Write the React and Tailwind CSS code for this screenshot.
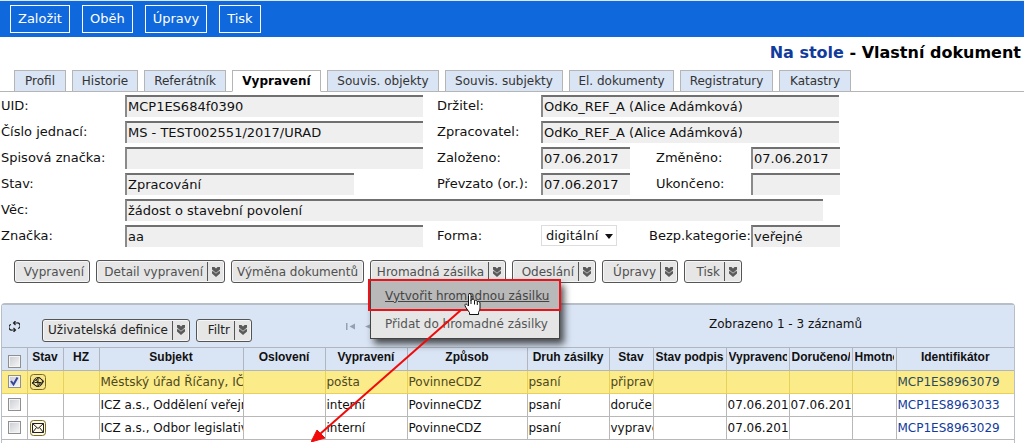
import { useState } from 'react';

const MENU = ['Založit', 'Oběh', 'Úpravy', 'Tisk'];

const TABS = [
  { label: 'Profil', width: 'w-[52px]' },
  { label: 'Historie', width: 'w-[66px]' },
  { label: 'Referátník', width: 'w-[82px]' },
  { label: 'Vypravení', width: 'w-[89px]' },
  { label: 'Souvis. objekty', width: 'w-[112px]' },
  { label: 'Souvis. subjekty', width: 'w-[118px]' },
  { label: 'El. dokumenty', width: 'w-[105px]' },
  { label: 'Registratury', width: 'w-[93px]' },
  { label: 'Katastry', width: 'w-[72px]' },
];

const COLUMNS = [
  { label: 'Stav', width: 'w-[36px]' },
  { label: 'HZ', width: 'w-[36px]' },
  { label: 'Subjekt', width: 'w-[144px]' },
  { label: 'Oslovení', width: 'w-[82px]' },
  { label: 'Vypravení', width: 'w-[82px]' },
  { label: 'Způsob', width: 'w-[120px]' },
  { label: 'Druh zásilky', width: 'w-[82px]' },
  { label: 'Stav', width: 'w-[44px]' },
  { label: 'Stav podpisu', width: 'w-[73px]', clipped: true },
  { label: 'Vypraveno', width: 'w-[63px]', clipped: true },
  { label: 'Doručeno/', width: 'w-[63px]', clipped: true },
  { label: 'Hmotnost', width: 'w-[44px]', clipped: true },
  { label: 'Identifikátor', width: '' },
];

const ROWS = [
  {
    id: 'MCP1ES8963079',
    icon: 'target',
    cells: ['', 'Městský úřad Říčany, IČ', '', 'pošta', 'PovinneCDZ', 'psaní', 'připraveno', '', '', '', ''],
  },
  {
    id: 'MCP1ES8963033',
    icon: null,
    cells: ['', 'ICZ a.s., Oddělení veřejné', '', 'interní', 'PovinneCDZ', 'psaní', 'doručeno', '', '07.06.2017', '07.06.2017', ''],
  },
  {
    id: 'MCP1ES8963029',
    icon: 'mail',
    cells: ['', 'ICZ a.s., Odbor legislativy', '', 'interní', 'PovinneCDZ', 'psaní', 'vypraveno', '', '07.06.2017', '', ''],
  },
];

const DoubleArrow = () => (
  <svg className="h-[10px] w-2 shrink-0" viewBox="0 0 8 10" fill="#5a5a5a">
    <path d="M0 0h2.500L4 1.500 5.500 0H8v2.500L6.800 3.800 8 4.500V6.500L4 10 0 6.500v-2l1.200-.7L0 2.500z" />
    <path d="M1 3.800L4 6.200 7 3.800" fill="none" stroke="#e6e6e6" strokeWidth="0.700" />
  </svg>
);

const ActionButton = ({ label, width, split, dark, ...props }) => (
  <button
    type="button"
    className={`flex h-[23px] items-center justify-end whitespace-nowrap rounded-[3px] border border-[#555] bg-[#e6e6e6] text-xs shadow-[inset_0_0_0_1px_#f6f6f6] ${width} ${
      dark ? 'text-[#222]' : 'text-[#505050]'
    } ${split ? 'pr-1' : 'pr-[5px]'}`}
    {...props}
  >
    {label}
    {split && (
      <span className="ml-1 flex h-[19px] items-center border-l border-[#555] pl-1">
        <DoubleArrow />
      </span>
    )}
  </button>
);

const Field = ({ id, label, value = '', width, labelClass = '' }) => (
  <>
    <label htmlFor={id} className={`whitespace-nowrap leading-[22px] ${labelClass}`}>
      {label}
    </label>
    <input
      id={id}
      readOnly
      defaultValue={value}
      className={`h-[22px] border-t-2 border-l-2 border-t-[#707070] border-l-[#8a8a8a] bg-[#efefef] pb-[2px] pl-px outline-none ${width}`}
    />
  </>
);

const Checkbox = (props) => (
  <span className="relative mx-auto block h-[13px] w-[13px]">
    <input
      type="checkbox"
      className="peer block h-[13px] w-[13px] appearance-none border border-[#8e8f8f] bg-linear-to-br from-[#c9ccd2] to-[#f8f8f8] shadow-[inset_0_0_0_1px_#f4f4f4]"
      {...props}
    />
    <svg
      className="pointer-events-none absolute inset-0 hidden h-[13px] w-[13px] peer-checked:block"
      viewBox="0 0 13 13"
      fill="none"
      stroke="#34459c"
      strokeWidth="2"
    >
      <path d="M3 6l2.500 3.500L9.500 2.500" />
    </svg>
  </span>
);

const RowIcon = ({ name }) => (
  <svg className="block h-4 w-4" viewBox="0 0 16 16" fill="none" stroke="#222">
    <rect x="0.5" y="0.5" width="15" height="15" rx="3" fill={name === 'mail' ? '#fffbe8' : '#f8e68e'} stroke="#7a6a20" />
    {name === 'mail' ? (
      <path d="M2.500 3.500h11v9h-11zM2.500 3.500L8 8.500l5.500-5M2.500 12.500l4-5M13.500 12.500l-4-5" />
    ) : (
      <g>
        <circle cx="8" cy="8" r="4.500" />
        <path d="M2 9l7-5.500L14 7.500 7 12.500zM4.500 8.500h7M8 4.500v7M5.500 6l5 4" />
      </g>
    )}
  </svg>
);

const DropdownMenu = () => (
  <div className="absolute top-5 left-0 z-10 w-[190px] border border-[#444] bg-[#e6e6e6] text-xs text-[#555] shadow-[4px_5px_7px_#222c]">
    <button type="button" className="block h-[29px] w-full bg-[#b9b9b9] pl-[14px] text-left text-[#444] underline">
      Vytvořit hromadnou zásilku
    </button>
    <button type="button" className="block h-7 w-full pl-[14px] text-left whitespace-nowrap">
      Přidat do hromadné zásilky
    </button>
    {/* callout frame, arrow and pointer over the first item */}
    <svg className="pointer-events-none absolute -top-0.5 -left-[60px] h-[163px] w-[254px]" viewBox="0 0 254 163" fill="none">
      <rect x="58" y="1" width="191" height="30" stroke="#e8141c" strokeWidth="2" />
      <path d="M150 31L9 155" stroke="#f00a0a" strokeWidth="2" />
      <path d="M0 163L6 151L14 159z" fill="#f00a0a" stroke="#f00a0a" />
      <path
        d="M158 14.500c1.500 0 2 1 2 2v5l1-1c1-.8 2.500 0 2.500 1.200 1-.9 2.500-.2 2.700.9 1-.7 2.800 0 2.800 1.400v5c0 2-1 3-1.500 4.500v2h-9v-2c-1.500-2-4-5-4.500-7-.3-1.300 1-2 2-1l1.500 1.500V16.500c0-1 .3-2 1-2z"
        fill="#fff"
        stroke="#111"
      />
      <path d="M160 21v4M163.500 22v3.500M166.300 23v3" stroke="#111" />
    </svg>
  </div>
);

const App = () => {
  const [selected, setSelected] = useState(['MCP1ES8963079']);

  const toggle = (id) =>
    setSelected((prev) => (prev.includes(id) ? prev.filter((x) => x !== id) : [...prev, id]));

  return (
    <div className="overflow-hidden bg-white font-['DejaVu_Sans',Verdana,sans-serif] text-[13px] text-[#111]">
      <header className="flex h-[37px] items-center gap-3 border-t border-[#dce8fa] bg-[#0f68dc] pl-[10px]">
        {MENU.map((item) => (
          <button key={item} type="button" className="h-7 border border-white px-[7px] text-[13px] text-white">
            {item}
          </button>
        ))}
      </header>

      <h1 className="h-[33px] pt-1 pr-[3px] text-right text-base font-bold text-black">
        <a href="#stul" className="text-[#123c9c]">Na stole</a> - Vlastní dokument
      </h1>

      <nav className="flex gap-[6px] border-b border-[#b5b5b5] pl-[14px]">
        {TABS.map(({ label, width }) => (
          <a
            key={label}
            href="#tab"
            className={`-mb-px h-[22px] border border-[#b5b5b5] text-center text-xs leading-5 whitespace-nowrap ${width} ${
              label === 'Vypravení' ? 'border-b-white bg-white font-bold text-black' : 'bg-[#d9e4f4] text-[#333]'
            }`}
          >
            {label}
          </a>
        ))}
      </nav>

      <form className="grid grid-cols-[124px_312px_104px_115px_95px_90px] gap-y-1 pt-[3px] pl-px">
        <Field id="uid" label="UID:" value="MCP1ES684f0390" width="w-[298px]" />
        <Field id="drzitel" label="Držitel:" value="OdKo_REF_A (Alice Adámková)" width="col-span-3 w-[298px]" />

        <Field id="cj" label="Číslo jednací:" value="MS - TEST002551/2017/URAD" width="w-[298px]" />
        <Field id="zpracovatel" label="Zpracovatel:" value="OdKo_REF_A (Alice Adámková)" width="col-span-3 w-[298px]" />

        <Field id="spis" label="Spisová značka:" width="w-[298px]" />
        <Field id="zalozeno" label="Založeno:" value="07.06.2017" width="w-[89px]" />
        <Field id="zmeneno" label="Změněno:" value="07.06.2017" width="w-[89px]" />

        <Field id="stav" label="Stav:" value="Zpracování" width="w-[229px]" />
        <Field id="prevzato" label="Převzato (or.):" value="07.06.2017" width="w-[89px]" />
        <Field id="ukonceno" label="Ukončeno:" width="w-[89px]" />

        <Field id="vec" label="Věc:" value="žádost o stavební povolení" width="col-span-5 w-[698px]" />

        <Field id="znacka" label="Značka:" value="aa" width="w-[298px]" />
        <label htmlFor="forma" className="leading-[22px]">Forma:</label>
        <div className="relative w-[76px]">
          <select id="forma" className="h-[21px] w-full appearance-none border border-[#ddd] bg-white pl-1 leading-4">
            <option>digitální</option>
            <option>analogová</option>
          </select>
          <svg className="pointer-events-none absolute top-[9px] right-1 h-[5px] w-2" viewBox="0 0 8 5">
            <path d="M0 0h8L4 5z" fill="#111" />
          </svg>
        </div>
        <Field id="kategorie" label="Bezp.kategorie:" value="veřejné" width="w-[89px]" labelClass="justify-self-end" />
      </form>

      <div className="flex gap-[6px] pt-[13px] pl-[14px]">
        <ActionButton label="Vypravení" width="w-[76px]" />
        <ActionButton label="Detail vypravení" width="w-[129px]" split />
        <ActionButton label="Výměna dokumentů" width="w-[133px]" />
        <div className="relative">
          <ActionButton label="Hromadná zásilka" width="w-[136px]" split aria-expanded="true" />
          <DropdownMenu />
        </div>
        <ActionButton label="Odeslání" width="w-[84px]" split />
        <ActionButton label="Úpravy" width="w-[76px]" split />
        <ActionButton label="Tisk" width="w-[58px]" split />
      </div>

      <section className="mt-5 mr-[9px] ml-px rounded-t-[4px] border border-t-2 border-b-0 border-[#b8bec8] bg-white">
        <div className="grid h-[42px] grid-cols-[340px_1fr_464px] items-center bg-[#d9e4f4] pt-2">
          <div className="flex items-center pl-[7px]">
            <button type="button" title="Obnovit" className="mr-[22px] -mt-2">
              <svg className="block h-[11px] w-[11px]" viewBox="0 0 11 11" fill="none" stroke="#222" strokeWidth="1.200">
                <path d="M5 2h2.500a2.500 2.500 0 0 1 1.500 5.500M6 9H3.500A2.500 2.500 0 0 1 2 3.500M6.500 0L4.500 2l2 2M4.500 7l2 2-2 2" />
              </svg>
            </button>
            <div className="flex gap-[6px]">
              <ActionButton label="Uživatelská definice" width="w-[148px]" split dark />
              <ActionButton label="Filtr" width="w-[56px]" split dark />
            </div>
          </div>
          <div className="-mt-2 flex gap-2 pl-1">
            <button type="button" title="První">
              <svg className="block h-[7px] w-[9px]" viewBox="0 0 9 7" fill="#96a0b4">
                <path d="M0 0h1.500v7H0zM9 .5v6L3.500 3.500z" />
              </svg>
            </button>
            <button type="button" title="Předchozí">
              <svg className="block h-[7px] w-[9px]" viewBox="0 0 9 7" fill="#96a0b4">
                <path d="M9 .5v6L2 3.500z" />
              </svg>
            </button>
          </div>
          <div className="-mt-3 pl-[159px] text-xs">Zobrazeno 1 - 3 záznamů</div>
        </div>

        <table className="w-full table-fixed border-collapse text-xs">
          <thead>
            <tr className="h-[23px] bg-[#d9e4f4] font-['Liberation_Sans',Arial,sans-serif]">
              <th className="w-[25px] border-t border-r border-b border-[#b0b6c0] p-0 pt-1">
                <Checkbox aria-label="Vybrat vše" />
              </th>
              {COLUMNS.map(({ label, width, clipped }, i) => (
                <th
                  key={i}
                  className={`overflow-hidden border border-[#b0b6c0] p-0 pb-1 font-bold whitespace-nowrap last:border-r-0 ${width} ${
                    clipped ? 'pl-[2px] text-left' : 'text-center'
                  }`}
                >
                  <div className={clipped ? 'mr-[2px] overflow-hidden' : ''}>{label}</div>
                </th>
              ))}
            </tr>
          </thead>
          <tbody>
            {ROWS.map(({ id, icon, cells }) => {
              const active = selected.includes(id);
              const border = active ? 'border-[#e6d15c]' : 'border-[#b8b8b8]';
              return (
                <tr key={id} className={`h-[23px] ${active ? 'bg-[#fbeb89] text-[#4d4820]' : 'bg-white'}`}>
                  <td className={`border-r border-b p-0 pb-[2px] ${border}`}>
                    <Checkbox aria-label={id} checked={active} onChange={() => toggle(id)} />
                  </td>
                  <td className={`border-r border-b p-0 pl-[2px] ${border}`}>{icon && <RowIcon name={icon} />}</td>
                  {cells.map((cell, i) => (
                    <td key={i} className={`overflow-hidden border-r border-b p-0 pl-px whitespace-nowrap ${border}`}>
                      {cell}
                    </td>
                  ))}
                  <td className={`border-b p-0 pl-px ${border}`}>
                    <a href="#zasilka" className={active ? 'text-[#2c4a5c]' : 'text-[#123c9c]'}>{id}</a>
                  </td>
                </tr>
              );
            })}
          </tbody>
        </table>
        <div className="h-[3px]" />
      </section>
    </div>
  );
};

export default App;
